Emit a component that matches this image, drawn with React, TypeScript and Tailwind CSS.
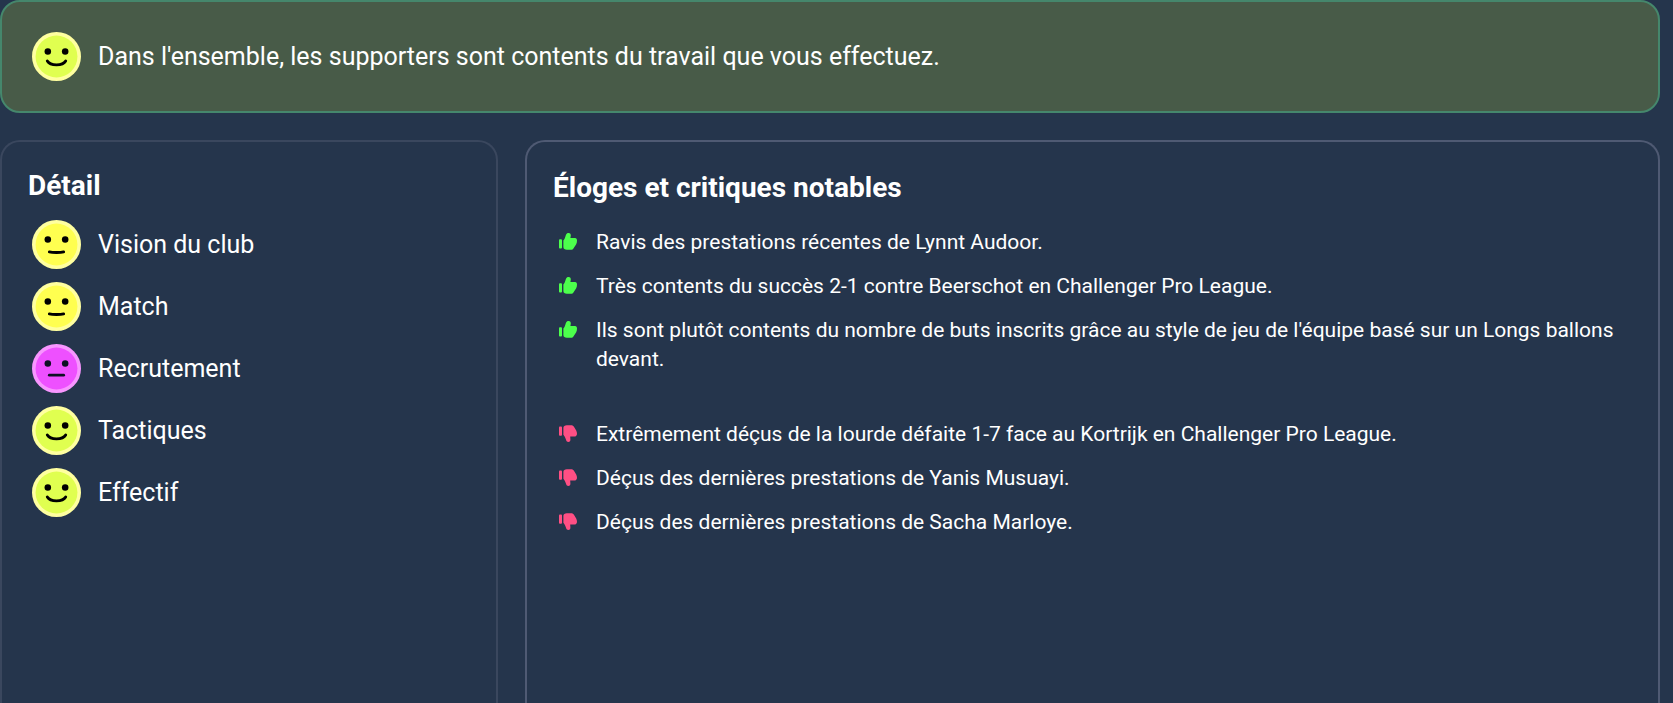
type Mood = "happy" | "neutral" | "flat"

interface FaceProps {
  mood: Mood
}

const faceColors = {
  happy: { fill: "#e0ff50", ring: "#ffffa0", ink: "#000000" },
  neutral: { fill: "#ffff50", ring: "#ffffa0", ink: "#000000" },
  flat: { fill: "#ee50ff", ring: "#f896ff", ink: "#0c1024" },
}

const faceMouths = {
  happy: "M15 28.5C18 33.5 30 33.5 33 28.5",
  neutral: "M17 31.2C20 32 28 32 31 31.2",
  flat: "M17 30.5H31",
}

function Face({ mood }: FaceProps) {
  const { fill, ring, ink } = faceColors[mood]
  return (
    <svg viewBox="0 0 48 48" className="h-[49px] w-[49px] shrink-0" aria-hidden="true">
      <circle cx="24" cy="24" r="24" fill={ring} />
      <circle cx="24" cy="24" r="20.5" fill={fill} />
      <circle cx="15.5" cy="19" r="3.2" fill={ink} />
      <circle cx="32.5" cy="19" r="3.2" fill={ink} />
      <path d={faceMouths[mood]} fill="none" stroke={ink} strokeWidth="2.8" strokeLinecap="round" />
    </svg>
  )
}

interface ThumbProps {
  up: boolean
}

function Thumb({ up }: ThumbProps) {
  if (up) {
    return (
      <svg viewBox="0 0 18 17" className="mt-[5px] h-[17px] w-[18px] shrink-0 fill-[#4cff4c]" aria-hidden="true">
        <rect x="0" y="6.3" width="3" height="9.2" rx="0.9" />
        <path d="M4.4 7.4C5.6 6.2 6.2 4.2 6.8 2.2C7.3 .6 8.4 0 9.6 0C11.2 0 12 1.2 11.8 2.8L11.4 5H16C17.4 5 18 6.1 18 7.4C18 8.8 17.8 10.2 17.2 11.3L14.6 15.2C13.9 16.3 13.2 16.8 12 16.8H7.8C5.8 16.8 4.4 15.7 4.4 14Z" />
      </svg>
    )
  }
  return (
    <svg viewBox="0 0 18 17" className="mt-[5px] h-[17px] w-[18px] shrink-0 fill-[#ff4f84]" aria-hidden="true">
      <rect x="0" y="1.5" width="3" height="9.2" rx="0.9" />
      <path d="M4.4 2.8C4.4 1.1 5.8 .2 7.8 .2H12C13.2 .2 13.9 .7 14.8 1.6L17.2 5.4C17.8 6.5 18 7.5 18 8.8C18 10.3 17.2 11.4 16 11.4H11.2L11.4 14.2C11.5 16 10.8 17 9.4 17C8.2 17 7.4 16.3 7 14.8C6.4 13 5.8 11.4 4.4 9.8Z" />
    </svg>
  )
}

const details: { label: string; mood: Mood }[] = [
  { label: "Vision du club", mood: "neutral" },
  { label: "Match", mood: "neutral" },
  { label: "Recrutement", mood: "flat" },
  { label: "Tactiques", mood: "happy" },
  { label: "Effectif", mood: "happy" },
]

const praises = [
  "Ravis des prestations récentes de Lynnt Audoor.",
  "Très contents du succès 2-1 contre Beerschot en Challenger Pro League.",
  "Ils sont plutôt contents du nombre de buts inscrits grâce au style de jeu de l'équipe basé sur un Longs ballons devant.",
]

const criticisms = [
  "Extrêmement déçus de la lourde défaite 1-7 face au Kortrijk en Challenger Pro League.",
  "Déçus des dernières prestations de Yanis Musuayi.",
  "Déçus des dernières prestations de Sacha Marloye.",
]

interface CommentListProps {
  items: string[]
  up: boolean
}

function CommentList({ items, up }: CommentListProps) {
  return (
    <ul className="flex flex-col gap-[15px] pl-1.5">
      {items.map((item) => (
        <li key={item} className="flex items-start gap-[19px]">
          <Thumb up={up} />
          <p className="text-[21px] leading-[29px]">{item}</p>
        </li>
      ))}
    </ul>
  )
}

export default function App() {
  return (
    <main className="flex min-h-screen flex-col gap-[27px] bg-[#25354c] pr-[13px] font-['Roboto',sans-serif] text-white">
      <section className="flex items-center gap-[17px] rounded-[20px] border-2 border-[#45876c] bg-[#485b48] p-[30px]">
        <Face mood="happy" />
        <p className="text-[25px] leading-8">Dans l'ensemble, les supporters sont contents du travail que vous effectuez.</p>
      </section>

      <div className="grid flex-1 grid-cols-[30%_1fr] gap-[27px]">
        <section className="rounded-t-[20px] border-2 border-b-0 border-[#3a475e] px-[26px] pt-7">
          <h2 className="text-[28px] leading-8 font-bold">Détail</h2>
          <ul className="mt-[18px] flex flex-col gap-[13px] pl-1">
            {details.map((detail) => (
              <li key={detail.label} className="flex items-center gap-[17px]">
                <Face mood={detail.mood} />
                <span className="text-[25px] leading-8">{detail.label}</span>
              </li>
            ))}
          </ul>
        </section>

        <section className="rounded-t-[20px] border-2 border-b-0 border-[#4f5a73] px-[26px] pt-[30px]">
          <h2 className="mb-6 text-[28px] leading-8 font-bold">Éloges et critiques notables</h2>
          <CommentList items={praises} up />
          <div className="mt-[46px]">
            <CommentList items={criticisms} up={false} />
          </div>
        </section>
      </div>
    </main>
  )
}
